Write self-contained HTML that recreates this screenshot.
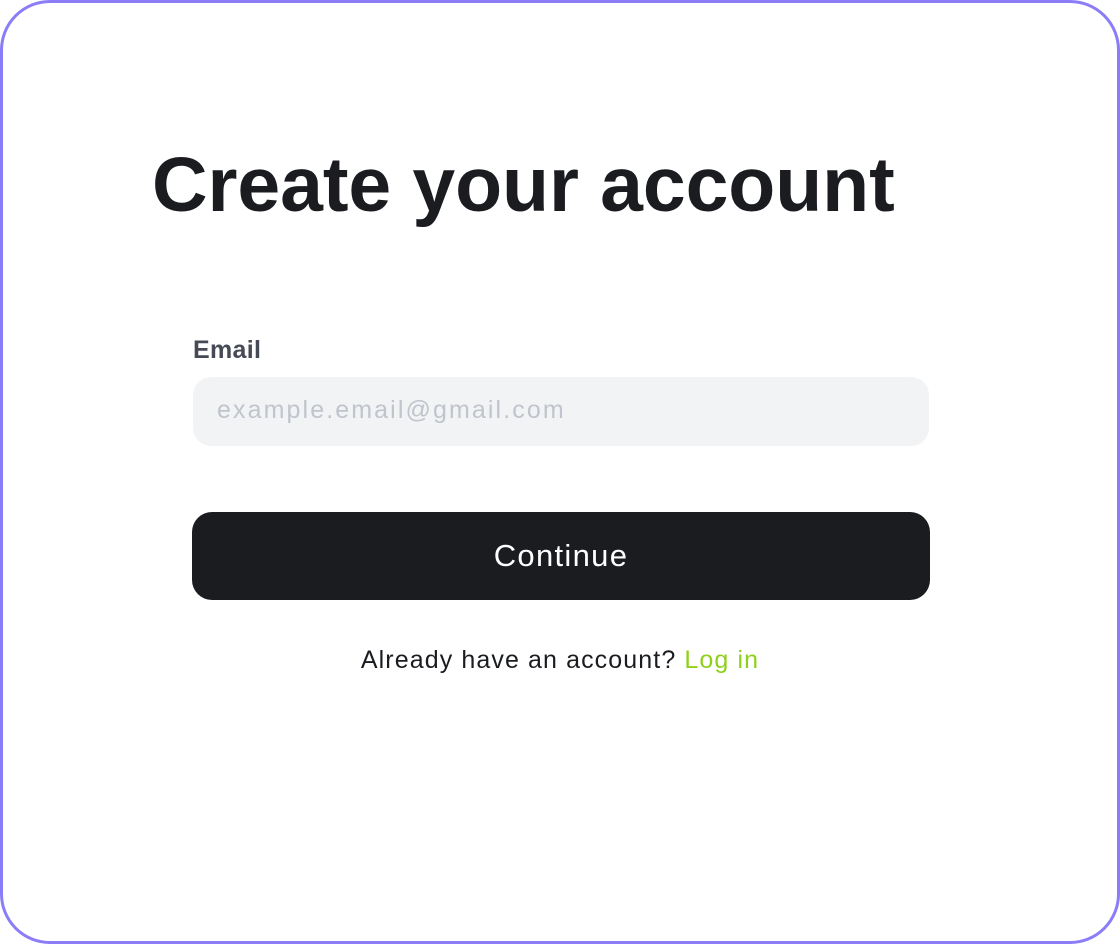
<!DOCTYPE html>
<html><head><meta charset="utf-8"><style>
html,body{margin:0;padding:0;background:#fff;}
body{width:1120px;height:944px;position:relative;overflow:hidden;font-family:"Liberation Sans",sans-serif;}
.card{position:absolute;left:0;top:0;width:1114px;height:938px;border:3px solid #8b7cf7;border-radius:50px;}
h1{position:absolute;left:152px;top:140px;margin:0;font-size:77px;font-weight:700;color:#1a1c20;letter-spacing:-0.1px;white-space:nowrap;line-height:90px;}
.label{position:absolute;left:193px;top:336px;font-size:25px;font-weight:700;color:#454a55;letter-spacing:0.3px;}
.input{position:absolute;left:193px;top:377px;width:736px;height:69px;border-radius:18px;background:#f2f3f5;}
.input span{position:absolute;left:24px;top:19px;font-size:25px;color:#c0c4cc;letter-spacing:2.1px;}
.btn{position:absolute;left:192px;top:512px;width:738px;height:88px;border-radius:20px;background:#1a1c20;color:#fff;font-size:31px;text-align:center;line-height:88px;letter-spacing:1.3px;}
.foot{position:absolute;left:0;width:1120px;top:646px;text-align:center;font-size:25px;color:#1a1c20;letter-spacing:1.1px;}
.foot span{color:#8fd11a;}
</style></head><body>
<div class="card"></div>
<h1>Create your account</h1>
<div class="label">Email</div>
<div class="input"><span>example.email@gmail.com</span></div>
<div class="btn">Continue</div>
<div class="foot">Already have an account? <span>Log in</span></div>
</body></html>
